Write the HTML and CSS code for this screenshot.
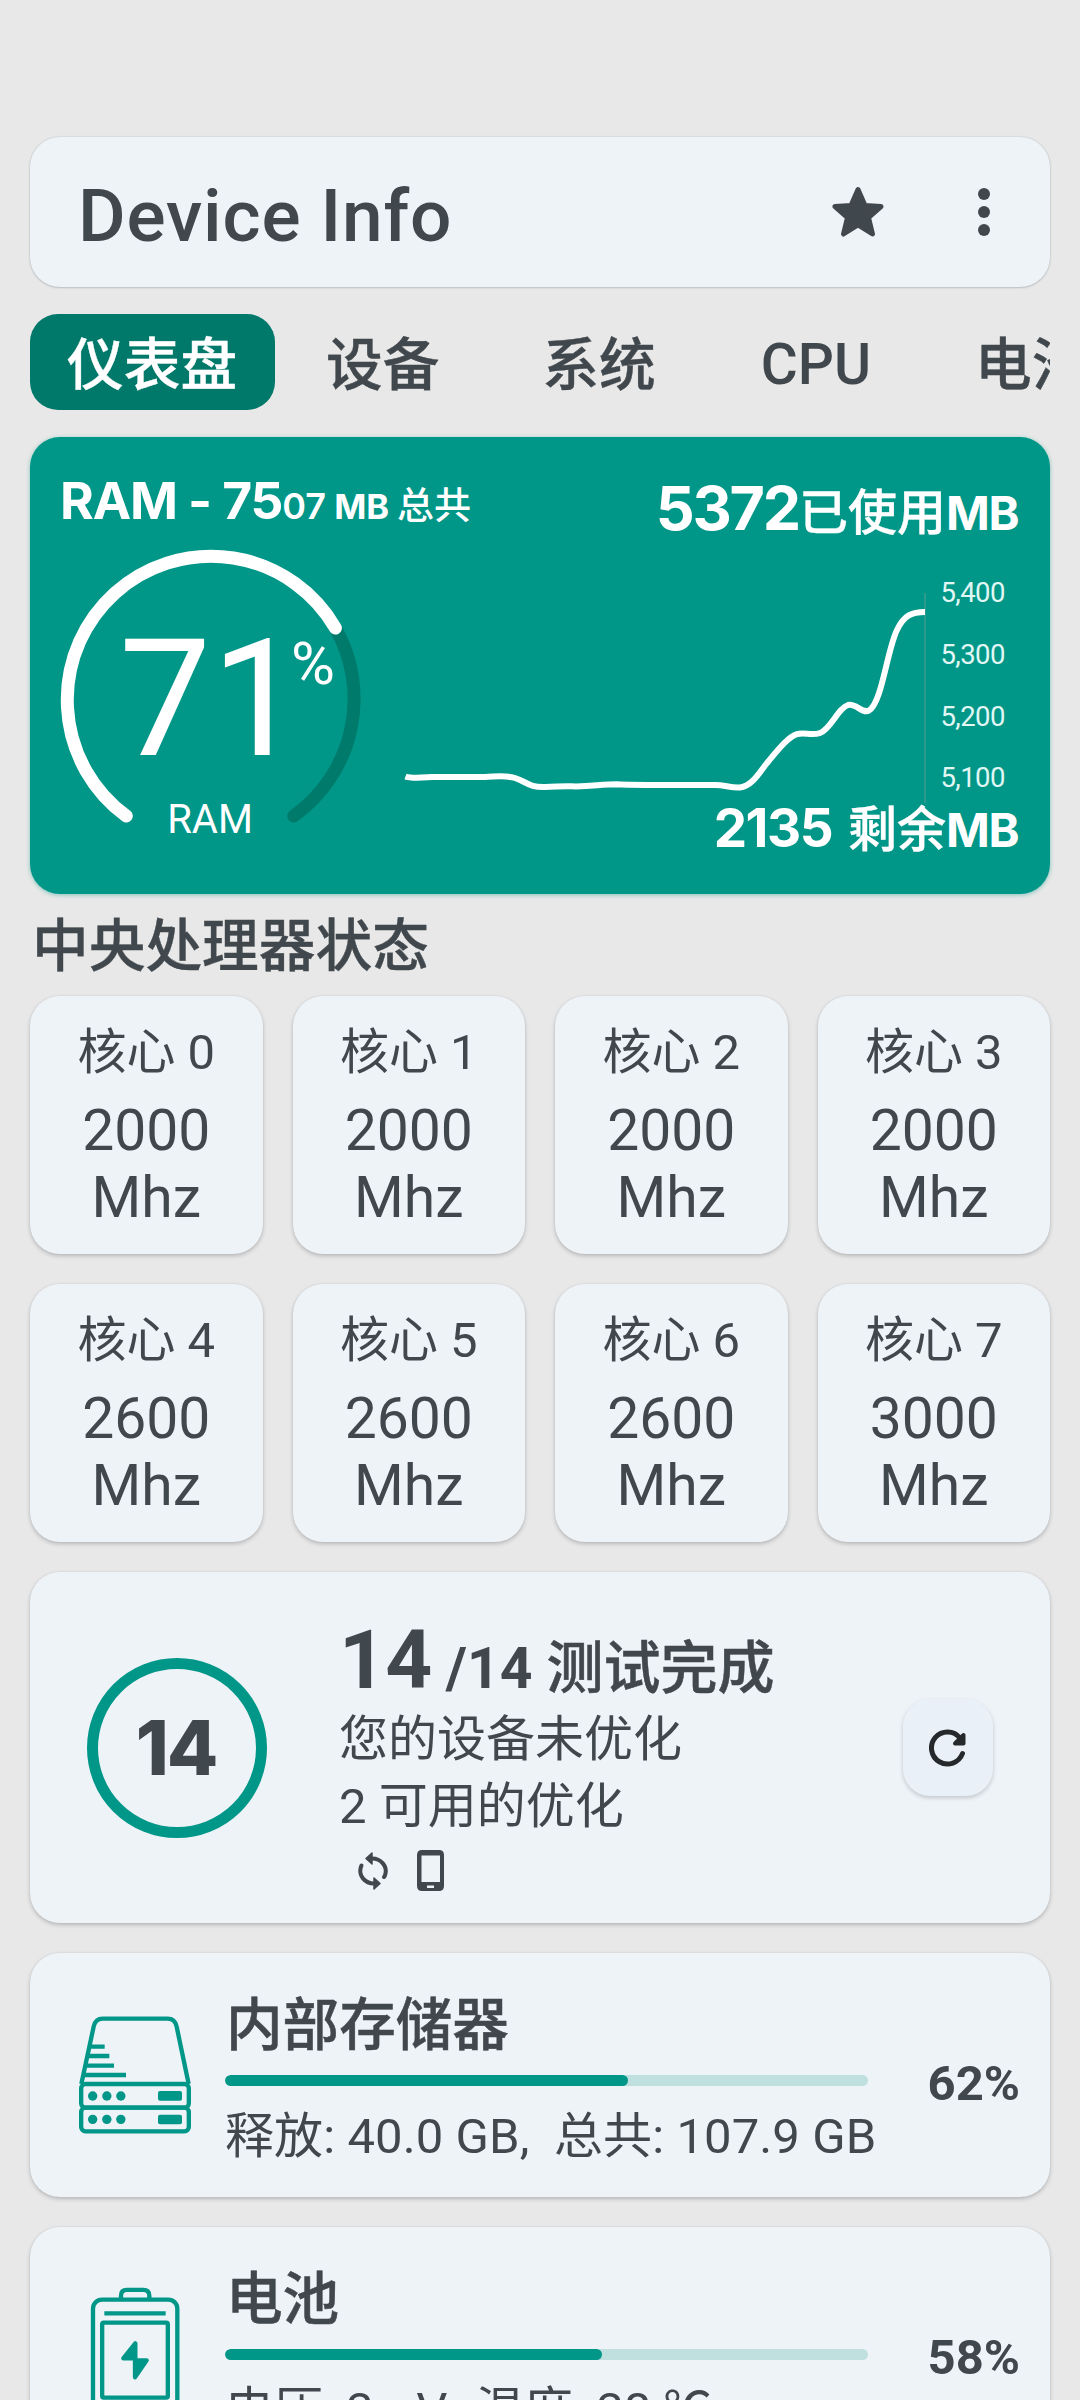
FILE: index.html
```html
<!DOCTYPE html>
<html lang="zh-CN">
<head>
<meta charset="utf-8">
<title>Device Info</title>
<link rel="stylesheet" href="styles.css">
</head>
<body>
<main class="screen">
  <header class="appbar card">
    <h1 class="appbar-title">Device Info</h1>
    <svg class="icon-star" width="52" height="52" viewBox="0 0 52 52"><path d="M26 3.5 33 19.5 49 20.500 36.500 31.500 40.500 48 26 39 11.500 48 15.500 31.500 3 20.500 19 19.500Z" fill="currentColor" stroke="currentColor" stroke-width="5" stroke-linejoin="round"/></svg>
    <svg class="icon-more" width="12" height="50" viewBox="0 0 12 50"><circle cx="6" cy="7" r="6"/><circle cx="6" cy="25" r="6"/><circle cx="6" cy="43" r="6"/></svg>
  </header>

  <nav class="tabs">
    <a class="tab tab-active">仪表盘</a>
    <a class="tab">设备</a>
    <a class="tab">系统</a>
    <a class="tab tab-latin">CPU</a>
    <a class="tab">电池</a>
  </nav>

  <section class="ram">
    <div class="ram-head">
      <p class="ram-total">RAM - 75<span class="ram-small"><span class="ram-thin">07</span> MB <span class="ram-cjk">总共</span></span></p>
      <p class="ram-used">5372<span class="ram-unit"><span class="ram-word">已使用</span>MB</span></p>
    </div>
    <div class="ram-body">
      <div class="gauge">
        <svg class="gauge-arc" width="300" height="300" viewBox="0 0 300 300" fill="none" stroke-width="13" stroke-linecap="round">
          <path class="gauge-track" d="M275.400 79A143.700 143.700 0 0 1 233.700 267"/>
          <path class="gauge-value" d="M66.300 267A143.700 143.700 0 1 1 275.400 79"/>
        </svg>
        <div class="gauge-number">71</div>
        <div class="gauge-percent">%</div>
        <div class="gauge-label">RAM</div>
      </div>
      <div class="chart">
        <svg class="chart-plot" width="620" height="249" viewBox="400 549 620 249">
          <path class="chart-axis" d="M925 593V803"/>
          <path class="chart-line" d="M405.500 776.500C412 779 424 777.500 432 777L485 777C498 776.500 506 775 515 778C527 782 529 787.500 545 787C556 787 560 786 571 786.300C590 787 600 784.300 617 784.300C630 785 645 785 660 785L715 785C725 785 730 788 740 787.500C752 786 759 773 767 763C778 750 788 737 797 734.200C804 732 812 736 820 733C831 729 838 708 848 705C856 703 862 714 869 710.500C882 703 887 650 897 630C904 615 912 612 925 612"/>
          <g class="chart-ticks">
            <text x="940.500" y="602">5,400</text>
            <text x="940.500" y="664">5,300</text>
            <text x="940.500" y="725.500">5,200</text>
            <text x="940.500" y="787">5,100</text>
          </g>
        </svg>
        <p class="ram-free">2135 <span class="ram-unit"><span class="ram-word">剩余</span>MB</span></p>
      </div>
    </div>
  </section>

  <h2 class="section-title">中央处理器状态</h2>
  <section class="cores">
    <article class="core card"><p class="core-name">核心 0</p><p class="core-speed">2000<br>Mhz</p></article>
    <article class="core card"><p class="core-name">核心 1</p><p class="core-speed">2000<br>Mhz</p></article>
    <article class="core card"><p class="core-name">核心 2</p><p class="core-speed">2000<br>Mhz</p></article>
    <article class="core card"><p class="core-name">核心 3</p><p class="core-speed">2000<br>Mhz</p></article>
    <article class="core card"><p class="core-name">核心 4</p><p class="core-speed">2600<br>Mhz</p></article>
    <article class="core card"><p class="core-name">核心 5</p><p class="core-speed">2600<br>Mhz</p></article>
    <article class="core card"><p class="core-name">核心 6</p><p class="core-speed">2600<br>Mhz</p></article>
    <article class="core card"><p class="core-name">核心 7</p><p class="core-speed">3000<br>Mhz</p></article>
  </section>

  <section class="tests card">
    <div class="ring">14</div>
    <div class="tests-text">
      <h3 class="tests-title">14<span class="tests-rest"> /14 <span class="tests-word">测试完成</span></span></h3>
      <p>您的设备未优化</p>
      <p>2 可用的优化</p>
      <div class="tests-icons">
        <svg width="32" height="40" viewBox="0 0 32 40" fill="none" stroke="currentColor" stroke-width="4" stroke-linecap="round"><path d="M15 7.500C24.500 7.500 30 15.500 28.500 22.500Q28 25 27 26"/><path d="M17 32.500C7.500 32.500 2 24.500 3.500 17.500Q4 15.500 4.500 14.500"/><path d="M15 2V13L9 7.500ZM17 27V38L23 32.500Z" fill="currentColor" stroke-width="1.500" stroke-linejoin="round"/></svg>
        <svg width="27" height="41" viewBox="0 0 27 41"><path fill="currentColor" fill-rule="evenodd" d="M5 0H22Q27 0 27 5V36Q27 41 22 41H5Q0 41 0 36V5Q0 0 5 0ZM4.500 5.500V32H23V5.500ZM10 35.500V38H17V35.500Z"/></svg>
      </div>
    </div>
    <button class="refresh" aria-label="刷新"><svg width="38" height="38" viewBox="0 0 38 38"><path d="M33.500 24.500A16 16 0 1 1 31 9" fill="none" stroke="currentColor" stroke-width="5" stroke-linecap="round"/><path d="M34.500 6V14.500H26Z" fill="currentColor" stroke="currentColor" stroke-width="4" stroke-linejoin="round"/></svg></button>
  </section>

  <section class="meter card">
    <svg class="meter-icon" width="112" height="118" viewBox="27 48 336 354" fill="none" stroke="currentColor" stroke-width="13">
      <path d="M34 252 71 80Q76 56 98 56H293Q315 56 320 80L356 252"/>
      <rect x="33.500" y="252" width="323" height="71" rx="13"/>
      <rect x="33.500" y="323" width="323" height="71" rx="13"/>
      <path d="M60 140H104M56 168H118M50 197H132M44 225H168"/>
      <g fill="currentColor" stroke="none"><circle cx="68" cy="288" r="14"/><circle cx="110.500" cy="288" r="14"/><circle cx="152.500" cy="288" r="14"/><rect x="264" y="273" width="72" height="29" rx="6"/><circle cx="68" cy="358" r="14"/><circle cx="110.500" cy="358" r="14"/><circle cx="152.500" cy="358" r="14"/><rect x="264" y="344" width="72" height="29" rx="6"/></g>
    </svg>
    <div class="meter-main">
      <h3 class="meter-title">内部存储器</h3>
      <div class="bar"><div class="bar-fill" style="width:62.700%"></div></div>
      <p class="meter-detail">释放: 40.0 GB,&nbsp; 总共: 107.9 GB</p>
    </div>
    <p class="meter-percent">62%</p>
  </section>

  <section class="meter card">
    <svg class="meter-icon" width="112" height="124" viewBox="27 862 336 372" fill="none" stroke="currentColor" stroke-width="13">
      <rect x="69" y="900" width="253" height="327" rx="27"/>
      <path d="M153 900V888Q153 870.500 170 870.500H220Q238 870.500 238 888V900"/>
      <path d="M103 941H287"/>
      <rect x="96.500" y="969" width="197" height="225" rx="5"/>
      <path d="M196 1031V1082H230L195 1133V1076H160Z" fill="currentColor" stroke-linejoin="round"/>
    </svg>
    <div class="meter-main">
      <h3 class="meter-title">电池</h3>
      <div class="bar"><div class="bar-fill" style="width:58.600%"></div></div>
      <p class="meter-detail meter-detail-battery">电压: 3mV,&nbsp; 温度: 38 ℃</p>
    </div>
    <p class="meter-percent">58%</p>
  </section>
</main>
</body>
</html>
```
FILE: styles.css
```css
* { box-sizing: border-box; }
html { background: #e8e8e8; }
body {
  margin: 0;
  height: 2400px;
  overflow: hidden;
  background: #e8e8e8;
  color: #41484d;
  font-family: Roboto, "Noto Sans CJK SC", sans-serif;
}
h1, h2, h3, p { margin: 0; font-weight: inherit; white-space: nowrap; }
.screen {
  display: flex;
  flex-direction: column;
  padding: 137px 30px 0;
}
.card {
  flex: none;
  background: #eef3f8;
  border-radius: 30px;
  box-shadow: 0 2px 4px rgba(0, 0, 0, .2), 0 0 2px rgba(0, 0, 0, .08);
}

.appbar {
  display: flex;
  align-items: center;
  height: 150px;
  padding: 0 60px 0 48px;
  box-shadow: 0 1px 2px rgba(60, 80, 90, .2), 0 0 2px rgba(60, 80, 90, .25);
}
.appbar-title {
  flex: 1;
  padding-top: 8px;
  font-size: 73px;
  font-weight: 500;
  letter-spacing: .85px;
  line-height: 90px;
}
.icon-star { margin-right: 94px; }
.icon-more { fill: currentColor; }

.tabs {
  display: flex;
  flex: none;
  height: 96px;
  margin: 27px 0;
  overflow: hidden;
}
.tab {
  flex: none;
  margin-right: 29px;
  padding: 6px 37px 0;
  border-radius: 28px;
  font-size: 56.700px;
  font-weight: 500;
  line-height: 91px;
  -webkit-text-stroke: .4px currentColor;
}
.tab-latin {
  margin: 0 30px 0 2px;
  padding-top: 5px;
  -webkit-text-stroke: 0;
}
.tab-active { width: 245px; margin-right: 14px; background: #00796b; color: #fff; }

.ram {
  flex: none;
  height: 457px;
  padding: 0 30px;
  border-radius: 30px;
  background: #009688;
  box-shadow: 0 1px 4px rgba(0, 150, 136, .45);
  color: #fff;
  font-weight: 700;
}
.ram-head {
  display: flex;
  justify-content: space-between;
  height: 112px;
  line-height: 60px;
  font-family: Inter, "Noto Sans CJK SC", sans-serif;
}
.ram-total { padding-top: 33px; font-size: 51.500px; letter-spacing: -1.100px; }
.ram-small { font-size: 34.500px; line-height: 0; letter-spacing: -.1px; }
.ram-thin { font-size: 36px; font-weight: 600; letter-spacing: 0; }
.ram-cjk { font-size: 37px; font-weight: 500; }
.ram-used { padding: 41px 2px 0 0; font-size: 61px; letter-spacing: -2.200px; }
.ram-unit { font-size: 47px; line-height: 0; letter-spacing: -1.500px; }
.ram-word {
  font-size: 49px;
  font-weight: 500;
  letter-spacing: 0;
  -webkit-text-stroke: .4px currentColor;
}
.ram-body { display: flex; justify-content: space-between; }
.gauge { position: relative; width: 300px; height: 300px; font-weight: 400; }
.gauge-arc { overflow: visible; }
.gauge-track { stroke: #007a6b; }
.gauge-value { stroke: #fff; }
.gauge-number {
  position: absolute;
  left: 59px;
  top: 50px;
  font-size: 164px;
  line-height: 200px;
}
.gauge-percent {
  position: absolute;
  left: 231px;
  top: 85px;
  font-size: 60px;
  line-height: 60px;
}
.gauge-label {
  position: absolute;
  left: 0;
  right: 0;
  top: 246px;
  text-align: center;
  font-size: 40px;
  line-height: 50px;
}
.chart { display: flex; flex-direction: column; align-items: flex-end; }
.chart-plot { display: block; overflow: visible; }
.chart-axis { stroke: #3a9c90; stroke-width: 1.500; }
.chart-line { fill: none; stroke: #fff; stroke-width: 6; }
.chart-ticks {
  fill: #e0f7f4;
  font: 400 27.500px Roboto, "Noto Sans CJK SC", sans-serif;
  letter-spacing: -.6px;
}
.ram-free {
  padding-right: 2px;
  font-family: Inter, "Noto Sans CJK SC", sans-serif;
  font-size: 53px;
  line-height: 60px;
  letter-spacing: -1.500px;
  word-spacing: 5px;
}

.section-title {
  flex: none;
  height: 102px;
  padding: 3px 0 0 2px;
  font-size: 56.700px;
  font-weight: 500;
  line-height: 100px;
  -webkit-text-stroke: .4px currentColor;
}
.cores {
  display: grid;
  flex: none;
  grid-template-columns: repeat(4, 1fr);
  gap: 30px;
}
.core { height: 258px; padding-top: 27px; text-align: center; }
.core-name { font-size: 49px; line-height: 60px; }
.core-speed { margin-top: 14px; font-size: 57px; line-height: 67px; }

.tests {
  display: flex;
  align-items: center;
  height: 351px;
  margin-top: 30px;
  padding: 0 57px;
}
.ring {
  display: flex;
  align-items: center;
  justify-content: center;
  width: 180px;
  height: 180px;
  padding-right: 2px;
  border: 11px solid #009688;
  border-radius: 50%;
  font: 800 75px Inter, sans-serif;
  letter-spacing: -2px;
}
.tests-text {
  flex: 1;
  align-self: flex-start;
  padding: 43px 0 0 72px;
  font-size: 49px;
  line-height: 67px;
}
.tests-title {
  margin-bottom: 1px;
  font-size: 82px;
  font-weight: 700;
  letter-spacing: -.7px;
  line-height: 90px;
}
.tests-rest { font-size: 57px; line-height: 0; letter-spacing: 0; }
.tests-word { font-weight: 500; -webkit-text-stroke: .5px currentColor; }
.tests-icons {
  display: flex;
  align-items: center;
  gap: 28px;
  margin: 10px 0 0 18px;
}
.refresh {
  display: flex;
  align-items: center;
  justify-content: center;
  width: 90px;
  height: 97px;
  padding: 0;
  border: 0;
  border-radius: 27px;
  background: #e9f0f7;
  box-shadow: 0 2px 4px rgba(0, 0, 0, .18);
  color: #26292b;
}

.meter {
  display: flex;
  align-items: center;
  height: 244px;
  margin-top: 30px;
  padding: 0 30px 0 49px;
}
.meter-icon { color: #009688; }
.meter-main { align-self: flex-start; width: 643px; margin-left: 34px; padding-top: 33px; }
.meter-title {
  padding-left: 1px;
  font-size: 56.600px;
  font-weight: 500;
  line-height: 80px;
  -webkit-text-stroke: .5px currentColor;
}
.bar {
  height: 11px;
  margin: 9px 0 20px;
  border-radius: 6px;
  background: #c0e0e0;
  overflow: hidden;
}
.bar-fill { height: 11px; border-radius: 6px; background: #009688; }
.meter-detail { font-size: 49px; letter-spacing: .1px; line-height: 61px; }
.meter-detail-battery { letter-spacing: -.2px; }
.meter-percent { margin-left: auto; padding-top: 17px; font-size: 49px; font-weight: 700; line-height: 60px; }
```
